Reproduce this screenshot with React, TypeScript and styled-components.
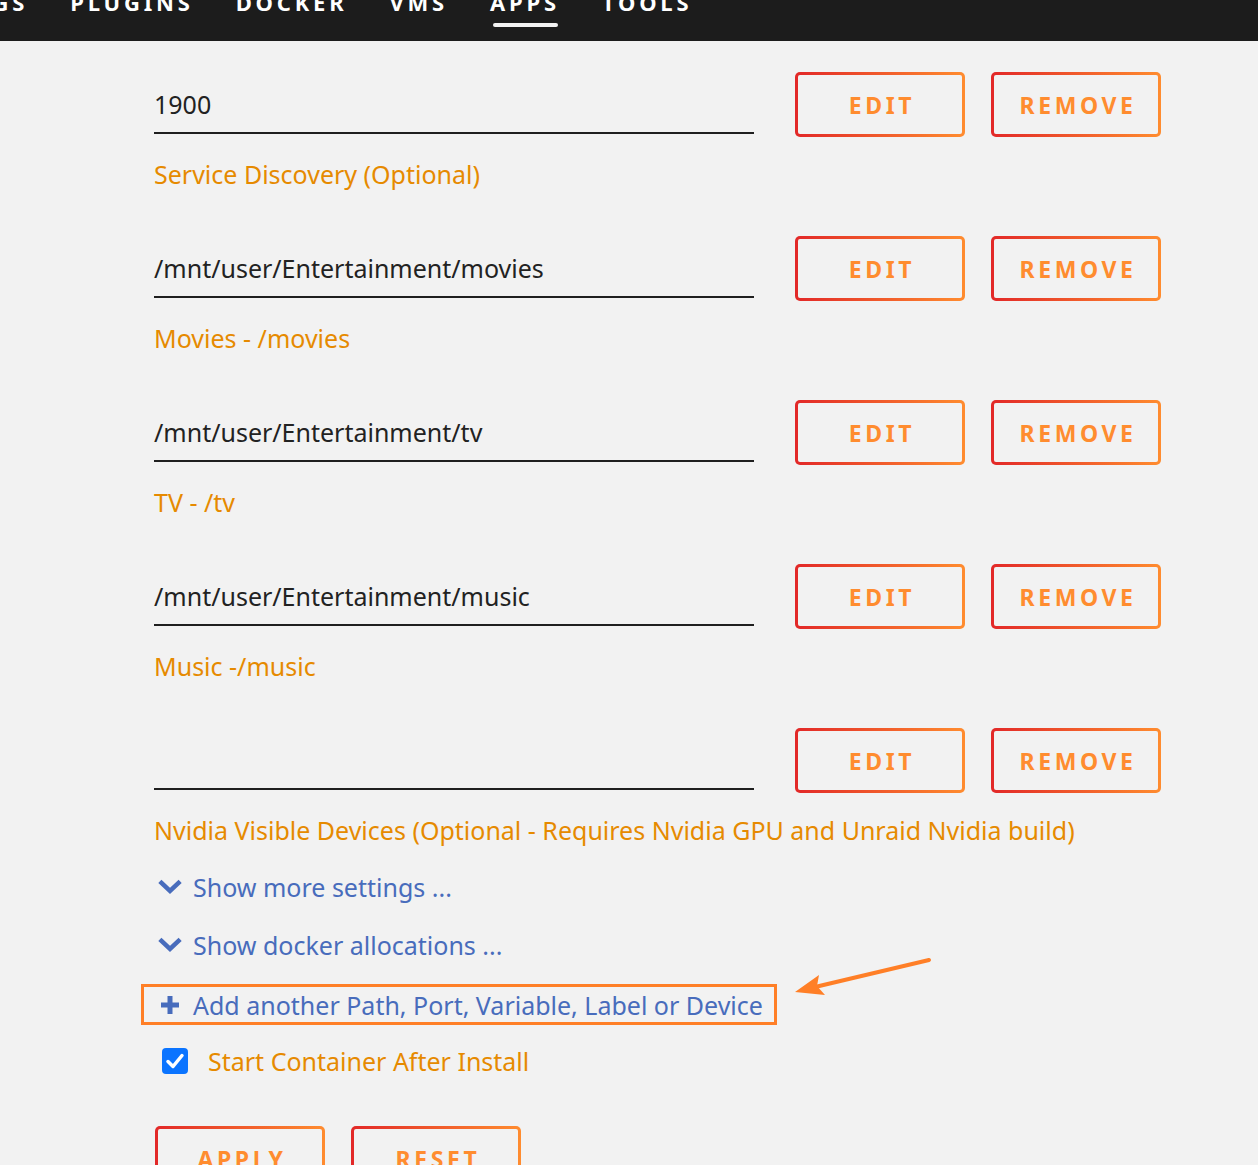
import styled, { createGlobalStyle } from "styled-components";

const GlobalStyle = createGlobalStyle`
  html, body {
    margin: 0;
    padding: 0;
    background: #f2f2f2;
    font-family: "Noto Sans", "Open Sans", sans-serif;
  }
`;

const navItems = ["SETTINGS", "PLUGINS", "DOCKER", "VMS", "APPS", "TOOLS"];

const mappings = [
  { value: "1900", label: "Service Discovery (Optional)" },
  { value: "/mnt/user/Entertainment/movies", label: "Movies - /movies" },
  { value: "/mnt/user/Entertainment/tv", label: "TV - /tv" },
  { value: "/mnt/user/Entertainment/music", label: "Music -/music" },
  {
    value: "",
    label:
      "Nvidia Visible Devices (Optional - Requires Nvidia GPU and Unraid Nvidia build)",
  },
];

function Chevron() {
  return (
    <svg width="24" height="16" viewBox="0 0 24 16">
      <path
        d="M3.5 4 L12 12 L20.5 4"
        fill="none"
        stroke="#486cbc"
        strokeWidth="4.5"
        strokeLinecap="square"
      />
    </svg>
  );
}

function PlusIcon() {
  return (
    <svg width="20" height="20" viewBox="0 0 20 20">
      <path d="M10 1 V19 M1 10 H19" stroke="#486cbc" strokeWidth="5" />
    </svg>
  );
}

function CheckIcon() {
  return (
    <svg width="26" height="26" viewBox="0 0 26 26">
      <rect x="0" y="0" width="26" height="26" rx="4" fill="#0b74ff" />
      <path
        d="M6 13.5 L11 18.5 L20 7.5"
        fill="none"
        stroke="#fff"
        strokeWidth="3.5"
        strokeLinecap="round"
        strokeLinejoin="round"
      />
    </svg>
  );
}

function App() {
  return (
    <>
      <GlobalStyle />
      <NavBar>
        <NavList>
          {navItems.map((item) => (
            <NavItem key={item} $active={item === "APPS"}>
              {item}
            </NavItem>
          ))}
        </NavList>
      </NavBar>
      <Form>
        {mappings.map((m, i) => (
          <MappingBlock key={i}>
            <MappingRow>
              <ValueField>{m.value}</ValueField>
              <GradientButton>EDIT</GradientButton>
              <GradientButton>REMOVE</GradientButton>
            </MappingRow>
            <MappingLabel>{m.label}</MappingLabel>
          </MappingBlock>
        ))}
        <Extras>
          <ToggleLink>
            <Chevron />
            Show more settings ...
          </ToggleLink>
          <ToggleLink>
            <Chevron />
            Show docker allocations ...
          </ToggleLink>
          <AddRow>
            <AddLink>
              <PlusIcon />
              Add another Path, Port, Variable, Label or Device
            </AddLink>
            {/* annotation arrow pointing at the add link */}
            <Arrow width="140" height="40" viewBox="0 0 140 40">
              <path d="M134 4 L20 31" stroke="#ff7f27" strokeWidth="4" strokeLinecap="round" />
              <path d="M0 36 L24 19 L22 30 L30 39 Z" fill="#ff7f27" />
            </Arrow>
          </AddRow>
          <CheckRow>
            <CheckIcon />
            <CheckLabel>Start Container After Install</CheckLabel>
          </CheckRow>
          <ActionRow>
            <GradientButton>APPLY</GradientButton>
            <GradientButton>RESET</GradientButton>
          </ActionRow>
        </Extras>
      </Form>
    </>
  );
}

const NavBar = styled.div`
  height: 41px;
  background: #1c1c1c;
  overflow: hidden;
`;

const NavList = styled.div`
  display: flex;
  gap: 42px;
  margin-left: -107px;
  margin-top: -12px;
`;

const NavItem = styled.div<{ $active?: boolean }>`
  position: relative;
  color: #fff;
  font-weight: bold;
  font-size: 22px;
  letter-spacing: 3.8px;
  line-height: 28px;
  &::after {
    content: "";
    display: ${(p) => (p.$active ? "block" : "none")};
    position: absolute;
    left: 3px;
    right: 2px;
    top: 35px;
    height: 4px;
    border-radius: 2px;
    background: #f2f2f2;
  }
`;

const Form = styled.div`
  padding: 31px 0 0 154px;
  display: flex;
  flex-direction: column;
`;

const MappingBlock = styled.div`
  display: flex;
  flex-direction: column;
  height: 164px;
`;

const MappingRow = styled.div`
  display: flex;
  align-items: flex-start;
  gap: 26px;
`;

const ValueField = styled.div`
  width: 600px;
  height: 43px;
  box-sizing: border-box;
  margin-top: 19px;
  margin-right: 15px;
  border-bottom: 2px solid #1f1f1f;
  font-size: 25px;
  line-height: 26px;
  color: #222;
`;

const GradientButton = styled.button`
  width: 170px;
  height: 65px;
  box-sizing: border-box;
  border: 3px solid transparent;
  border-radius: 5px;
  background:
    linear-gradient(#f2f2f2, #f2f2f2) padding-box,
    linear-gradient(90deg, #e22828, #ff8c2f) border-box;
  color: #ff8c2f;
  font-family: "Noto Sans", "Open Sans", sans-serif;
  font-weight: bold;
  font-size: 23px;
  letter-spacing: 3.6px;
  padding: 0 0 0 4px;
  cursor: pointer;
`;

const MappingLabel = styled.div`
  margin-top: 20px;
  font-size: 25px;
  line-height: 34px;
  color: #e68a00;
`;

const Extras = styled.div`
  display: flex;
  flex-direction: column;
  gap: 18px;
  margin-top: -25px;
`;

const ToggleLink = styled.div`
  display: flex;
  align-items: center;
  gap: 11px;
  margin-left: 4px;
  height: 40px;
  font-size: 25px;
  color: #486cbc;
  cursor: pointer;
`;

const AddRow = styled.div`
  display: flex;
  align-items: flex-start;
  gap: 20px;
  margin-left: -13px;
  margin-top: 1px;
`;

const AddLink = styled.div`
  display: flex;
  align-items: center;
  gap: 13px;
  width: 636px;
  height: 41px;
  box-sizing: border-box;
  border: 3px solid #ff7f27;
  padding-left: 16px;
  font-size: 25px;
  color: #486cbc;
  cursor: pointer;
`;

const Arrow = styled.svg`
  margin-top: -28px;
  margin-left: -2px;
`;

const CheckRow = styled.div`
  display: flex;
  align-items: center;
  gap: 20px;
  height: 34px;
  margin-top: 1px;
  margin-left: 8px;
`;

const CheckLabel = styled.span`
  font-size: 25px;
  line-height: 34px;
  color: #e68a00;
`;

const ActionRow = styled.div`
  display: flex;
  gap: 26px;
  margin-top: 30px;
  margin-left: 1px;
`;

export default App;
